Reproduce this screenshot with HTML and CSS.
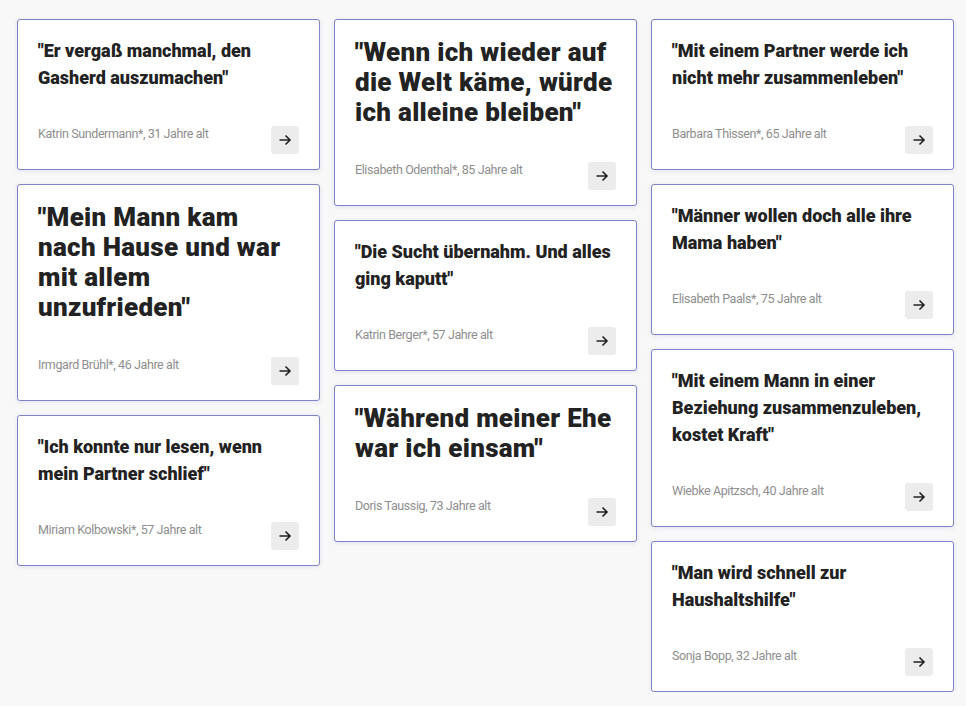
FILE: index.html
```html
<!DOCTYPE html>
<html lang="de">
<head>
<meta charset="utf-8">
<title>Zitate</title>
<link rel="stylesheet" href="styles.css">
</head>
<body>
<div class="grid">
  <div class="col">
    <article class="card">
      <h2 class="quote">"Er vergaß manchmal, den Gasherd auszumachen"</h2>
      <div class="foot"><span class="author">Katrin Sundermann*, 31 Jahre alt</span><button class="go" aria-label="Weiter"><svg viewBox="0 0 16 16" width="16" height="16"><path d="M2.5 8h10.5M8.5 3.5L13 8l-4.5 4.5" fill="none" stroke="#222" stroke-width="1.6"/></svg></button></div>
    </article>
    <article class="card">
      <h2 class="quote big">"Mein Mann kam nach Hause und war mit allem unzufrieden"</h2>
      <div class="foot"><span class="author">Irmgard Brühl*, 46 Jahre alt</span><button class="go" aria-label="Weiter"><svg viewBox="0 0 16 16" width="16" height="16"><path d="M2.5 8h10.5M8.5 3.5L13 8l-4.5 4.5" fill="none" stroke="#222" stroke-width="1.6"/></svg></button></div>
    </article>
    <article class="card">
      <h2 class="quote">"Ich konnte nur lesen, wenn mein Partner schlief"</h2>
      <div class="foot"><span class="author">Miriam Kolbowski*, 57 Jahre alt</span><button class="go" aria-label="Weiter"><svg viewBox="0 0 16 16" width="16" height="16"><path d="M2.5 8h10.5M8.5 3.5L13 8l-4.5 4.5" fill="none" stroke="#222" stroke-width="1.6"/></svg></button></div>
    </article>
  </div>
  <div class="col">
    <article class="card">
      <h2 class="quote big">"Wenn ich wieder auf die Welt käme, würde ich alleine bleiben"</h2>
      <div class="foot"><span class="author">Elisabeth Odenthal*, 85 Jahre alt</span><button class="go" aria-label="Weiter"><svg viewBox="0 0 16 16" width="16" height="16"><path d="M2.5 8h10.5M8.5 3.5L13 8l-4.5 4.5" fill="none" stroke="#222" stroke-width="1.6"/></svg></button></div>
    </article>
    <article class="card">
      <h2 class="quote">"Die Sucht übernahm. Und alles ging kaputt"</h2>
      <div class="foot"><span class="author">Katrin Berger*, 57 Jahre alt</span><button class="go" aria-label="Weiter"><svg viewBox="0 0 16 16" width="16" height="16"><path d="M2.5 8h10.5M8.5 3.5L13 8l-4.5 4.5" fill="none" stroke="#222" stroke-width="1.6"/></svg></button></div>
    </article>
    <article class="card">
      <h2 class="quote big">"Während meiner Ehe war ich einsam"</h2>
      <div class="foot"><span class="author">Doris Taussig, 73 Jahre alt</span><button class="go" aria-label="Weiter"><svg viewBox="0 0 16 16" width="16" height="16"><path d="M2.5 8h10.5M8.5 3.5L13 8l-4.5 4.5" fill="none" stroke="#222" stroke-width="1.6"/></svg></button></div>
    </article>
  </div>
  <div class="col">
    <article class="card">
      <h2 class="quote">"Mit einem Partner werde ich nicht mehr zusammenleben"</h2>
      <div class="foot"><span class="author">Barbara Thissen*, 65 Jahre alt</span><button class="go" aria-label="Weiter"><svg viewBox="0 0 16 16" width="16" height="16"><path d="M2.5 8h10.5M8.5 3.5L13 8l-4.5 4.5" fill="none" stroke="#222" stroke-width="1.6"/></svg></button></div>
    </article>
    <article class="card">
      <h2 class="quote">"Männer wollen doch alle ihre Mama haben"</h2>
      <div class="foot"><span class="author">Elisabeth Paals*, 75 Jahre alt</span><button class="go" aria-label="Weiter"><svg viewBox="0 0 16 16" width="16" height="16"><path d="M2.5 8h10.5M8.5 3.5L13 8l-4.5 4.5" fill="none" stroke="#222" stroke-width="1.6"/></svg></button></div>
    </article>
    <article class="card">
      <h2 class="quote">"Mit einem Mann in einer Beziehung zusammenzuleben, kostet Kraft"</h2>
      <div class="foot"><span class="author">Wiebke Apitzsch, 40 Jahre alt</span><button class="go" aria-label="Weiter"><svg viewBox="0 0 16 16" width="16" height="16"><path d="M2.5 8h10.5M8.5 3.5L13 8l-4.5 4.5" fill="none" stroke="#222" stroke-width="1.6"/></svg></button></div>
    </article>
    <article class="card">
      <h2 class="quote">"Man wird schnell zur Haushaltshilfe"</h2>
      <div class="foot"><span class="author">Sonja Bopp, 32 Jahre alt</span><button class="go" aria-label="Weiter"><svg viewBox="0 0 16 16" width="16" height="16"><path d="M2.5 8h10.5M8.5 3.5L13 8l-4.5 4.5" fill="none" stroke="#222" stroke-width="1.6"/></svg></button></div>
    </article>
  </div>
</div>
</body>
</html>
```

FILE: styles.css
```css
* { box-sizing: border-box; }
html, body { margin: 0; padding: 0; }
body {
  background: #f8f8f8;
  font-family: Roboto, "Liberation Sans", sans-serif;
  color: #222;
}
.grid {
  display: flex;
  gap: 14px;
  padding: 19px 12px 0 17px;
  align-items: flex-start;
}
.col {
  flex: 0 0 303px;
  display: flex;
  flex-direction: column;
  gap: 14px;
}
.card {
  background: #fff;
  border: 1px solid #7f83c8;
  border-radius: 3px;
  padding: 17px 20px 15px 20px;
  box-shadow: 0 1px 4px rgba(120, 124, 200, 0.18);
}
.quote {
  margin: 0;
  font-size: 18px;
  line-height: 27px;
  font-weight: 900;
  letter-spacing: 0;
  color: #222;
}
.quote.big {
  font-size: 26px;
  line-height: 30px;
  letter-spacing: 0.3px;
}
.foot {
  margin-top: 35px;
  display: flex;
  justify-content: space-between;
  align-items: flex-start;
}
.author {
  font-size: 12.5px;
  line-height: 16px;
  color: #8e8e8e;
  letter-spacing: -0.4px;
}
.go {
  width: 28px;
  height: 28px;
  border: 0;
  border-radius: 3px;
  background: #ececec;
  padding: 0;
  display: flex;
  align-items: center;
  justify-content: center;
  cursor: pointer;
}
```
